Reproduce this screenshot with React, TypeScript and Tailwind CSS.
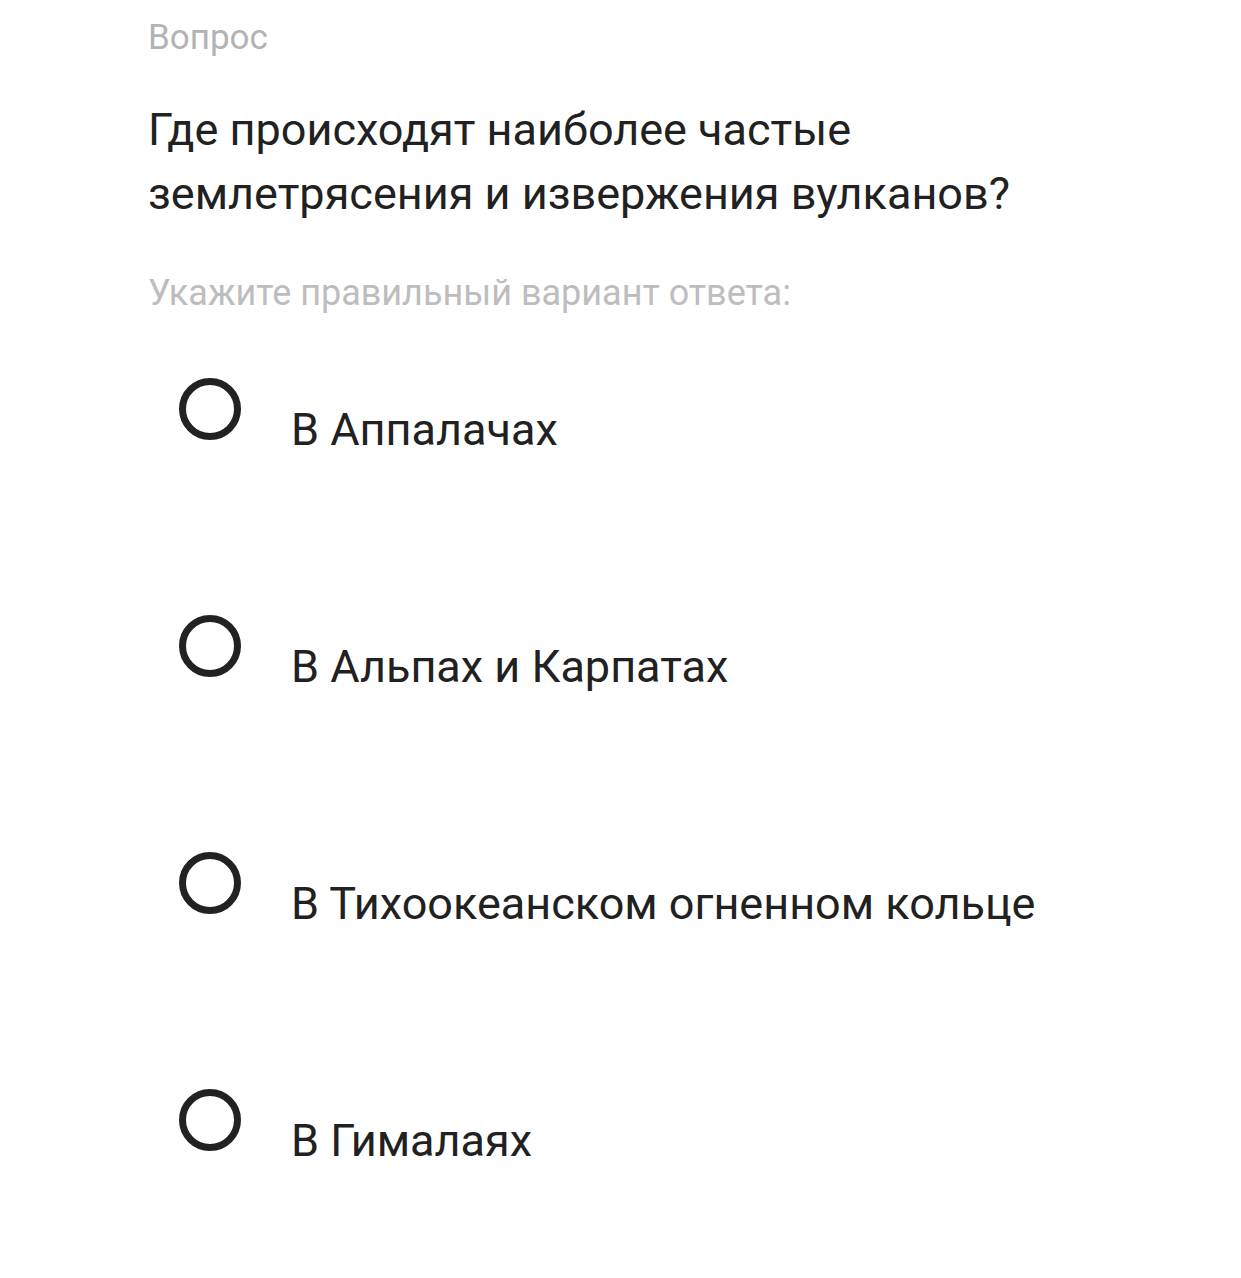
import React from "react";

const options = [
  "В Аппалачах",
  "В Альпах и Карпатах",
  "В Тихоокеанском огненном кольце",
  "В Гималаях",
];

export default function App() {
  return (
    <div className="min-h-[1278px] w-[1241px] bg-white font-['Roboto',sans-serif] pl-[148px] pt-[14px]">
      <div className="text-[35px] leading-[48px] text-[#b3b3b3]">Вопрос</div>
      <div className="mt-[36px] text-[45px] leading-[64px] text-[#212121] w-[950px]">
        Где происходят наиболее частые
        <br />
        землетрясения и извержения вулканов?
      </div>
      <div className="mt-[43px] text-[36px] leading-[48px] text-[#bdbdbd]">
        Укажите правильный вариант ответа:
      </div>
      <div className="mt-[61px] flex flex-col gap-[175px]">
        {options.map((o) => (
          <div key={o} className="flex items-start pl-[31px] h-[62px]">
            <div className="w-[62px] h-[62px] rounded-full border-[7px] border-[#222222] shrink-0" />
            <div className="ml-[50px] mt-[27px] text-[45px] leading-[50px] text-[#212121] whitespace-nowrap">
              {o}
            </div>
          </div>
        ))}
      </div>
    </div>
  );
}
